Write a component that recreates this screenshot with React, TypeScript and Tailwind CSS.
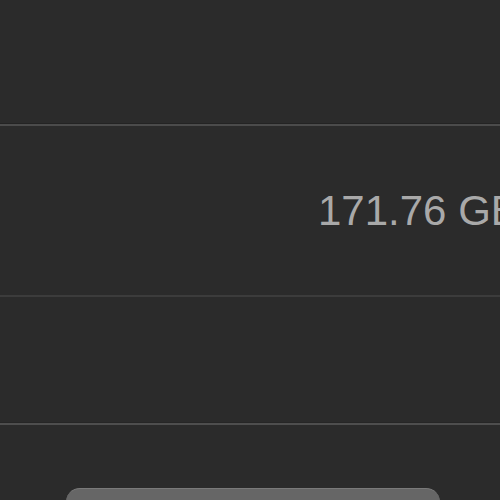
export default function App() {
  return (
    <div
      className="w-[500px] h-[500px] overflow-hidden bg-[#2b2b2b] flex flex-col"
      style={{ fontFamily: '"Liberation Sans", Arial, sans-serif' }}
    >
      {/* top section */}
      <div className="h-[124px] shrink-0 border-b border-[#232323]" />
      <div className="h-[2px] shrink-0 bg-[#4b4b4b]" />
      {/* storage row */}
      <div className="h-[169px] shrink-0 pl-[318px] pt-[64px] overflow-hidden">
        <p className="text-[42px] leading-none text-[#a9a9a9] whitespace-nowrap">
          171.76 GB
        </p>
      </div>
      <div className="h-[2px] shrink-0 bg-[#3c3c3c]" />
      {/* empty row */}
      <div className="h-[126px] shrink-0 border-b border-[#262626]" />
      <div className="h-[2px] shrink-0 bg-[#4e4e4e]" />
      {/* button row */}
      <div className="flex-1 pt-[63px] pl-[66px]">
        <div className="w-[374px] h-[40px] rounded-t-[14px] bg-[#666666] border-t border-[#7a7a7a]" />
      </div>
    </div>
  );
}
